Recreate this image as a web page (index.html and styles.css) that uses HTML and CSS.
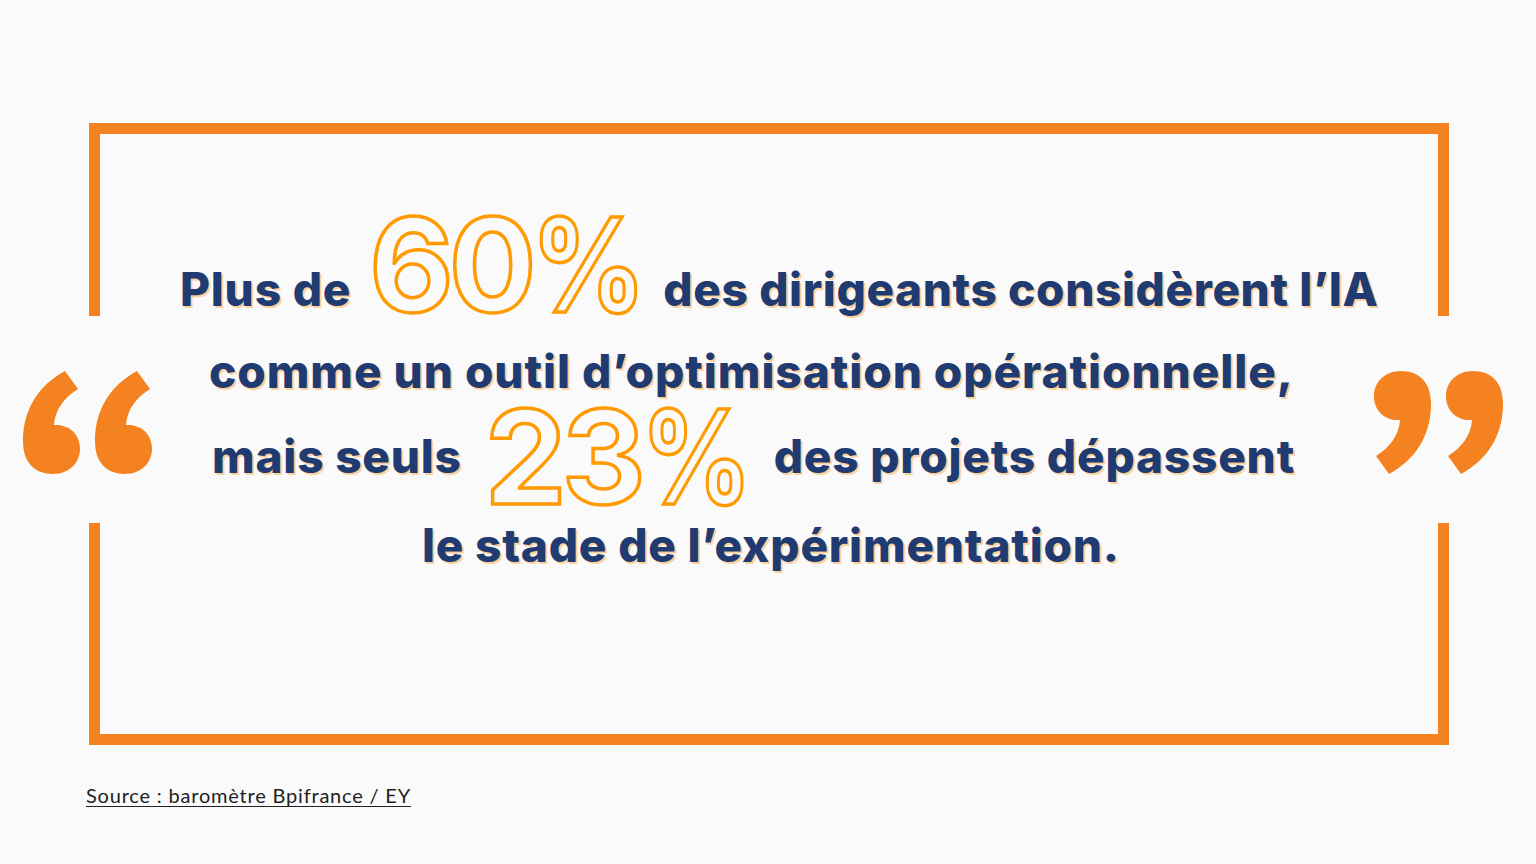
FILE: index.html
```html
<!DOCTYPE html>
<html lang="fr">
<head>
<meta charset="utf-8">
<title>Citation</title>
<link rel="stylesheet" href="styles.css">
</head>
<body>
<div class="frame">
  <div class="gap gap-left"></div>
  <div class="gap gap-right"></div>
  <svg class="quote quote-open" width="130" height="103" viewBox="0 0 130 103">
    <path d="M42 0 L55 18 C42 26 32 38 31 54 C45 53 57 62 57 78 C57 92 46 103 30 103 C12 103 0 92 0 70 C0 38 16 14 42 0 Z"/>
    <path transform="translate(72 0)" d="M42 0 L55 18 C42 26 32 38 31 54 C45 53 57 62 57 78 C57 92 46 103 30 103 C12 103 0 92 0 70 C0 38 16 14 42 0 Z"/>
  </svg>
  <svg class="quote quote-close" width="130" height="103" viewBox="0 0 130 103">
    <g transform="rotate(180 65 51.5)">
      <path d="M42 0 L55 18 C42 26 32 38 31 54 C45 53 57 62 57 78 C57 92 46 103 30 103 C12 103 0 92 0 70 C0 38 16 14 42 0 Z"/>
      <path transform="translate(72 0)" d="M42 0 L55 18 C42 26 32 38 31 54 C45 53 57 62 57 78 C57 92 46 103 30 103 C12 103 0 92 0 70 C0 38 16 14 42 0 Z"/>
    </g>
  </svg>
  <div class="content">
    <div class="row row1"><span class="t">Plus de</span><span class="num n60">60<span class="pct">%</span></span><span class="t">des dirigeants considèrent l’IA</span></div>
    <div class="row row2"><span class="t">comme un outil d’optimisation opérationnelle,</span></div>
    <div class="row row3"><span class="t">mais seuls</span><span class="num n23">23<span class="pct">%</span></span><span class="t">des projets dépassent</span></div>
    <div class="row row4"><span class="t">le stade de l’expérimentation.</span></div>
  </div>
</div>
<p class="source">Source : baromètre Bpifrance / EY</p>
</body>
</html>
```

FILE: styles.css
```css
html, body {
  margin: 0;
  padding: 0;
}
body {
  width: 1536px;
  height: 864px;
  overflow: hidden;
  background: #fafafa;
  font-family: "Inter", "Noto Sans", sans-serif;
}
.frame {
  box-sizing: border-box;
  position: relative;
  width: 1360px;
  height: 622px;
  margin: 123px 0 0 89px;
  border: 11px solid #f58220;
}
.gap {
  position: absolute;
  top: 182px;
  width: 11px;
  height: 207px;
  background: #fafafa;
}
.gap-left { left: -11px; }
.gap-right { right: -11px; }
.quote {
  position: absolute;
  top: 237px;
  fill: #f58220;
}
.quote-open { left: -77px; }
.quote-close { left: 1273px; }

.content {
  display: flex;
  flex-direction: column;
  padding-top: 79px;
}
.row {
  display: flex;
  align-items: flex-end;
  justify-content: flex-start;
}
.t {
  font-size: 46px;
  line-height: 1;
  font-weight: 800;
  letter-spacing: 0.8px;
  color: #1f3b72;
  text-shadow: 2px 2px 0 #fbd19d;
  white-space: nowrap;
}
.num {
  font-size: 130px;
  line-height: 0.8;
  font-weight: 700;
  letter-spacing: -5px;
  color: #fafafa;
  -webkit-text-stroke: 3.5px #ff9a00;
  white-space: nowrap;
}
.pct {
  display: inline-block;
  letter-spacing: 0;
  transform: scaleX(0.84);
  transform-origin: 0 50%;
  margin-right: -20px;
}
.n60 .pct { transform: scaleX(0.87); }
.row1 { padding-left: 80px; }
.row1 .t { margin-bottom: 5px; }
.row1 .t:last-child { letter-spacing: 0.6px; }
.row1 .num { margin: 0 20px 0 18px; }
.row2 { margin-top: 31px; padding-left: 109px; }
.row2 .t { letter-spacing: 0.95px; }
.row3 { margin-top: 11px; padding-left: 112px; }
.row3 .t { margin-bottom: 30px; }
.row3 .num { margin: 0 21px 0 23px; }
.row4 { margin-top: 13px; padding-left: 322px; }

.source {
  margin: 38px 0 0 86px;
  font-family: "Lato", "Open Sans", sans-serif;
  font-size: 20px;
  line-height: 24px;
  color: #222;
  letter-spacing: 0.8px;
  text-decoration: underline;
  text-decoration-thickness: 1px;
  text-underline-offset: 3px;
}
```
